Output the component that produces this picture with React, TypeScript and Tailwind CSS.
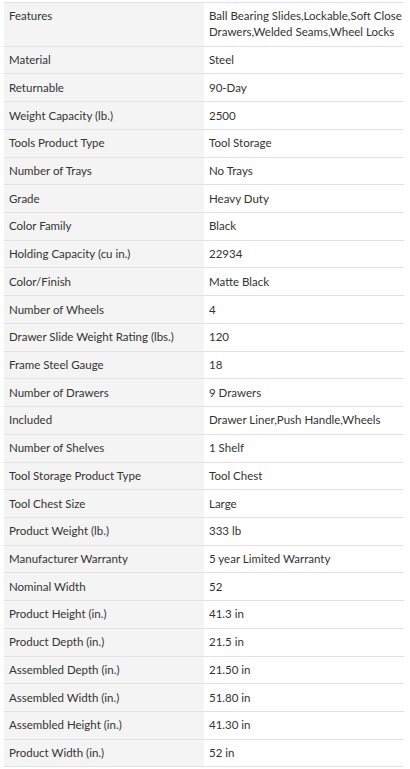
const specs: [string, string][] = [
  ['Features', 'Ball Bearing Slides,Lockable,Soft Close\nDrawers,Welded Seams,Wheel Locks'],
  ['Material', 'Steel'],
  ['Returnable', '90-Day'],
  ['Weight Capacity (lb.)', '2500'],
  ['Tools Product Type', 'Tool Storage'],
  ['Number of Trays', 'No Trays'],
  ['Grade', 'Heavy Duty'],
  ['Color Family', 'Black'],
  ['Holding Capacity (cu in.)', '22934'],
  ['Color/Finish', 'Matte Black'],
  ['Number of Wheels', '4'],
  ['Drawer Slide Weight Rating (lbs.)', '120'],
  ['Frame Steel Gauge', '18'],
  ['Number of Drawers', '9 Drawers'],
  ['Included', 'Drawer Liner,Push Handle,Wheels'],
  ['Number of Shelves', '1 Shelf'],
  ['Tool Storage Product Type', 'Tool Chest'],
  ['Tool Chest Size', 'Large'],
  ['Product Weight (lb.)', '333 lb'],
  ['Manufacturer Warranty', '5 year Limited Warranty'],
  ['Nominal Width', '52'],
  ['Product Height (in.)', '41.3 in'],
  ['Product Depth (in.)', '21.5 in'],
  ['Assembled Depth (in.)', '21.50 in'],
  ['Assembled Width (in.)', '51.80 in'],
  ['Assembled Height (in.)', '41.30 in'],
  ['Product Width (in.)', '52 in'],
];

export default function App() {
  return (
    <div className="min-h-screen bg-white pt-[2px] px-1 font-['Lato',sans-serif] text-[11.5px] text-[#333]">
      <div className="w-[400px] border-t border-[#e2e2e2]">
        {specs.map(([label, value]) => (
          <div key={label} className="grid grid-cols-2 border-b border-[#e2e2e2]">
            <div className="bg-[#f4f4f4] px-[5px] py-[5.37px] leading-4">{label}</div>
            <div className="whitespace-pre px-[5px] py-[5.37px] leading-4">{value}</div>
          </div>
        ))}
      </div>
    </div>
  );
}
